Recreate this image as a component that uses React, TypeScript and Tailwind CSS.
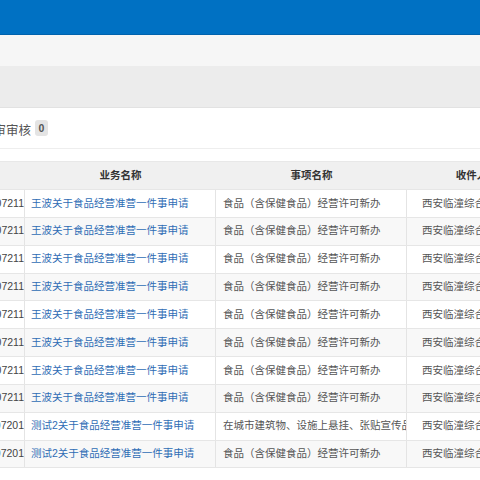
const rows = [
  { no: '202307211', name: '王波关于食品经营准营一件事申请', item: '食品（含保健食品）经营许可新办' },
  { no: '202307211', name: '王波关于食品经营准营一件事申请', item: '食品（含保健食品）经营许可新办' },
  { no: '202307211', name: '王波关于食品经营准营一件事申请', item: '食品（含保健食品）经营许可新办' },
  { no: '202307211', name: '王波关于食品经营准营一件事申请', item: '食品（含保健食品）经营许可新办' },
  { no: '202307211', name: '王波关于食品经营准营一件事申请', item: '食品（含保健食品）经营许可新办' },
  { no: '202307211', name: '王波关于食品经营准营一件事申请', item: '食品（含保健食品）经营许可新办' },
  { no: '202307211', name: '王波关于食品经营准营一件事申请', item: '食品（含保健食品）经营许可新办' },
  { no: '202307211', name: '王波关于食品经营准营一件事申请', item: '食品（含保健食品）经营许可新办' },
  { no: '202307201', name: '测试2关于食品经营准营一件事申请', item: '在城市建筑物、设施上悬挂、张贴宣传品' },
  { no: '202307201', name: '测试2关于食品经营准营一件事申请', item: '食品（含保健食品）经营许可新办' },
]

export default function App() {
  return (
    <div
      className="w-[480px] h-[480px] overflow-hidden bg-white"
      style={{ fontFamily: '"Liberation Sans", "Noto Sans CJK SC", sans-serif' }}
    >
      {/* top bar */}
      <div className="h-[35px] bg-[#0071c3] border-b border-[#0062ad]" />
      <div className="h-[31px] bg-[#f6f6f6]" />
      <div className="h-[42px] bg-[#ececec] border-b border-[#e2e2e2]" />

      {/* title */}
      <div className="h-[41px] border-b border-[#eeeeee] flex items-center">
        <div className="flex items-start gap-[4px] pt-[3px]">
          <div className="w-[31px] overflow-hidden flex justify-end whitespace-nowrap text-[12.5px] leading-[16px] text-[#555] mt-[3px]">
            初审审核
          </div>
          <span className="h-[16px] min-w-[13px] px-[3px] rounded-[3px] bg-[#e4e4e4] text-center text-[10.5px] font-bold leading-[16px] text-[#555]">
            0
          </span>
        </div>
      </div>

      {/* table */}
      <div className="mt-[12px] text-[10.5px] whitespace-nowrap">
        <div className="flex h-[28px] bg-[#f0f0f0] border-t border-[#e8e8e8] font-bold text-[#333] items-center">
          <div className="w-[25px] shrink-0 h-full" />
          <div className="w-[191px] shrink-0 text-center">业务名称</div>
          <div className="w-[191px] shrink-0 text-center">事项名称</div>
          <div className="w-[150px] shrink-0 text-center">收件人部门</div>
        </div>
        {rows.map((r, i) => (
          <div
            key={i}
            className={`flex h-[27.85px] items-center border-t border-[#e6e6e6] ${i % 2 === 1 ? 'bg-[#f8f8f8]' : 'bg-white'}`}
          >
            <div className="w-[25px] shrink-0 h-full overflow-hidden flex items-center justify-end text-[#444] border-r border-[#e4e4e4]">
              {r.no}
            </div>
            <div className="w-[191px] shrink-0 h-full overflow-hidden flex items-center pl-[6px] text-[#2f6db5] border-r border-[#e4e4e4]">
              {r.name}
            </div>
            <div className="w-[191px] shrink-0 h-full overflow-hidden flex items-center pl-[7px] text-[#555] border-r border-[#e4e4e4]">
              {r.item}
            </div>
            <div className="w-[150px] shrink-0 h-full overflow-hidden flex items-center pl-[15px] text-[#555]">
              西安临潼综合窗口
            </div>
          </div>
        ))}
        <div className="border-t border-[#e6e6e6]" />
      </div>
    </div>
  )
}
